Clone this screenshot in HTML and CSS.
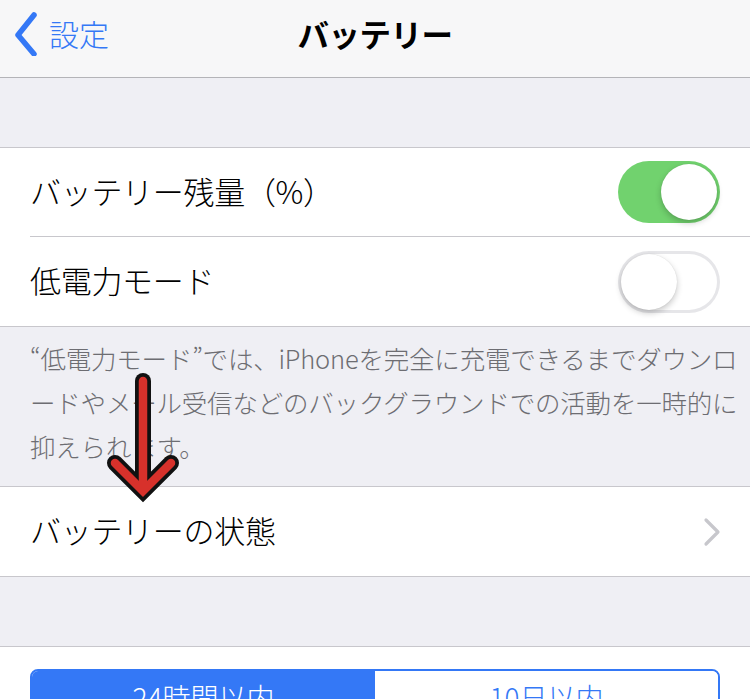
FILE: index.html
```html
<!DOCTYPE html>
<html lang="ja">
<head>
<meta charset="utf-8">
<link rel="stylesheet" href="styles.css">
</head>
<body>
<div class="page">
  <header class="nav">
    <div class="back">
      <svg class="back-chevron" width="30" height="44" viewBox="0 0 30 44"><path d="M21 3 L5 23 L21 42" fill="none" stroke="#3478f6" stroke-width="5.5" stroke-linecap="round" stroke-linejoin="round"/></svg>
      <span class="back-label">設定</span>
    </div>
    <div class="title">バッテリー</div>
    <div class="nav-right"></div>
  </header>

  <div class="gap"></div>

  <section class="group">
    <div class="row">
      <div class="row-inner sep">
        <span class="label">バッテリー残量（%）</span>
        <span class="switch on"><span class="knob"></span></span>
      </div>
    </div>
    <div class="row">
      <div class="row-inner">
        <span class="label">低電力モード</span>
        <span class="switch off"><span class="knob"></span></span>
      </div>
    </div>
  </section>

  <div class="note">“低電力モード”では、iPhoneを完全に充電できるまでダウンロ<br>ードやメール受信などのバックグラウンドでの活動を一時的に<br>抑えられます。</div>

  <section class="group">
    <div class="row">
      <div class="row-inner">
        <span class="label">バッテリーの状態</span>
        <svg class="chev" width="20" height="30" viewBox="0 0 20 30"><path d="M4 3 L16 15 L4 27" fill="none" stroke="#c7c7cc" stroke-width="3.2" stroke-linecap="round" stroke-linejoin="round"/></svg>
      </div>
    </div>
  </section>

  <div class="gap"></div>

  <section class="chart">
    <div class="segmented">
      <div class="seg active">24時間以内</div>
      <div class="seg">10日以内</div>
    </div>
  </section>

  <svg class="arrow" width="90" height="150" viewBox="0 0 90 150">
    <g fill="none" stroke-linejoin="miter" stroke-miterlimit="4">
      <path d="M43 19 L43 128" stroke="#111" stroke-width="16" stroke-linecap="round"/>
      <path d="M15 101 L43 129 L71 101" stroke="#111" stroke-width="16" stroke-linecap="round"/>
      <path d="M43 19 L43 128" stroke="#d7312b" stroke-width="8.5" stroke-linecap="round"/>
      <path d="M15 101 L43 129 L71 101" stroke="#d7312b" stroke-width="8.5" stroke-linecap="round"/>
    </g>
  </svg>
</div>
</body>
</html>
```

FILE: styles.css
```css
* { box-sizing: border-box; }
html, body { margin: 0; padding: 0; }
body {
  background: #ffffff;
  font-family: "Noto Sans CJK JP", "Noto Sans", sans-serif;
  color: #000;
}
.page {
  position: relative;
  width: 750px;
  height: 699px;
  overflow: hidden;
  background: #efeff4;
}
.nav {
  height: 78px;
  padding-bottom: 10px;
  background: #f7f7f8;
  border-bottom: 1px solid #b4b4b8;
  display: grid;
  grid-template-columns: 1fr auto 1fr;
  align-items: center;
}
.back {
  display: flex;
  align-items: center;
  padding-left: 13px;
  gap: 6px;
  color: #3478f6;
}
.back-chevron { display: block; }
.back-label {
  font-size: 30px;
  font-weight: 300;
  line-height: 1;
  margin-top: -2px;
}
.title {
  font-size: 31.5px;
  font-weight: 700;
  line-height: 1;
  letter-spacing: -0.5px;
}
.gap {
  height: 70px;
  background: #efeff4;
  border-bottom: 1px solid #c8c7cc;
}
.group {
  background: #fff;
  border-bottom: 1px solid #c8c7cc;
}
.row {
  padding-left: 30px;
}
.row-inner {
  height: 89px;
  display: flex;
  align-items: center;
  justify-content: space-between;
  padding-right: 30px;
}
.row-inner.sep {
  border-bottom: 1px solid #c8c7cc;
}
.label {
  font-size: 31px;
  font-weight: 300;
  line-height: 1;
  letter-spacing: -0.3px;
  margin-top: -4px;
}
.switch {
  position: relative;
  display: block;
  width: 102px;
  height: 62px;
  border-radius: 31px;
}
.switch.on { background: #71d26e; }
.switch.off {
  background: #fff;
  box-shadow: inset 0 0 0 3px #e6e6e9;
}
.knob {
  position: absolute;
  top: 3px;
  width: 56px;
  height: 56px;
  border-radius: 50%;
  background: #fff;
  box-shadow: 0 3px 6px rgba(0,0,0,0.22), 0 0 1px rgba(0,0,0,0.15);
}
.switch.on .knob { right: 3px; }
.switch.off .knob { left: 3px; }
.chev { display: block; margin-right: -2px; }
.note {
  padding: 9px 30px 18px 30px;
  font-size: 25.5px;
  font-weight: 300;
  line-height: 44px;
  color: #6d6d72;
  letter-spacing: -0.2px;
  border-bottom: 1px solid #c8c7cc;
  white-space: nowrap;
}
.chart {
  background: #fff;
  padding: 22px 30px 0 30px;
  height: 100px;
}
.segmented {
  display: flex;
  border: 2px solid #3478f6;
  border-radius: 8px;
  overflow: hidden;
  height: 60px;
}
.seg {
  flex: 1;
  text-align: center;
  font-size: 28px;
  font-weight: 300;
  line-height: 1;
  padding-top: 12px;
  color: #3478f6;
  background: #fff;
}
.seg.active {
  background: #3478f6;
  color: #fff;
}
.arrow {
  position: absolute;
  left: 100px;
  top: 362px;
}
```
